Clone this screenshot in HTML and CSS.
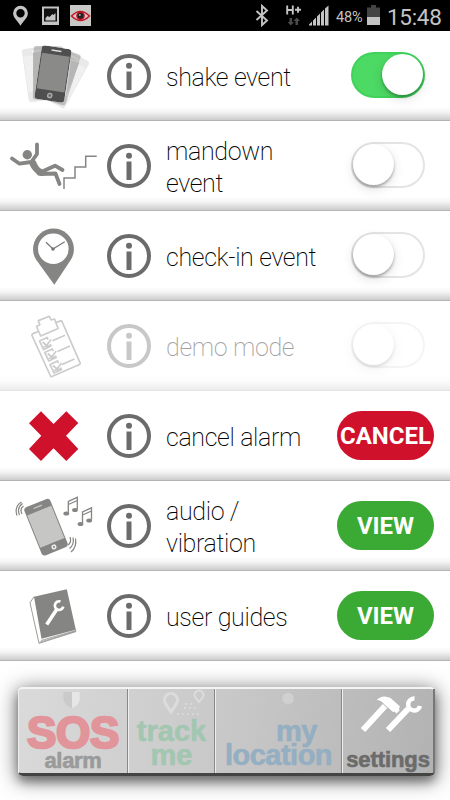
FILE: index.html
```
<!DOCTYPE html>
<html lang="en">
<head>
  <meta charset="UTF-8">
  <title>Settings</title>
  <link rel="stylesheet" href="styles.css">
</head>
<body>
  <svg class="defs" width="0" height="0">
    <symbol id="info" viewBox="0 0 44 44">
      <circle cx="22" cy="22" r="20" fill="none" stroke="#6b6b6b" stroke-width="4"/>
      <circle cx="22" cy="11.700" r="3" fill="#6b6b6b"/>
      <path d="M19.500 17.500h5V36h-5z" fill="#6b6b6b"/>
    </symbol>
    <symbol id="phone" viewBox="-15 -27 30 54">
      <rect x="-15" y="-27" width="30" height="54" rx="3.500" fill="#4f4f4f"/>
      <rect x="-14" y="-19.500" width="28" height="36" fill="#8a8a88"/>
      <path d="M-5-23.500H5" stroke="#ddd" stroke-width="1.600"/>
      <circle cx="0" cy="21.800" r="2.800" fill="#aaa"/>
      <rect x="-1.200" y="20.500" width="2.400" height="2.400" fill="#666"/>
    </symbol>
  </svg>

  <div class="status-bar">
    <svg width="100" height="31" viewBox="0 0 100 31">
      <path d="M20.500 5.800a7.400 7.400 0 0 0-7.400 7.400c0 4.600 4 6.800 7.400 12.600 3.400-5.800 7.400-8 7.400-12.600a7.400 7.400 0 0 0-7.400-7.400zm0 3.200a4.200 4.200 0 1 1 0 8.400 4.200 4.200 0 0 1 0-8.400z" fill="#c4c4c4"/>
      <rect x="42" y="6.500" width="17" height="18.500" fill="#c4c4c4"/>
      <rect x="44" y="8.500" width="13" height="13" fill="#111"/>
      <path d="M45.500 20.500v-2.500l2-2 2 1 3-3 1 1 2-2v7.500z" fill="#c4c4c4"/>
      <rect x="70" y="5" width="21" height="21" fill="#c8c8c6"/>
      <path d="M71.500 16q9-9 18 0-9 9-18 0z" fill="#e3c5c5" stroke="#c01a2a" stroke-width="1.500"/>
      <circle cx="80.500" cy="15.800" r="4.300" fill="#b01524"/>
      <circle cx="80.500" cy="15.800" r="2.800" fill="#222"/>
      <circle cx="79.800" cy="15" r="1" fill="#aaa"/>
    </svg>
    <div class="status-right">
      <svg width="80" height="31" viewBox="250 0 80 31">
        <path d="M255.500 11l10.500 9.500-5 4.500V6l5 4.500-10.500 9.500" fill="none" stroke="#c4c4c4" stroke-width="1.900"/>
        <path d="M286.200 5.500v9M291.800 5.500v9M286 10h6M294 9.700h6M297 6.700v6" fill="none" stroke="#c4c4c4" stroke-width="1.900"/>
        <path d="M288.500 18h2.500v4h2l-3.200 3.500-3.300-3.500h2zM294.500 25h2.500v-4h2l-3.200-3.500-3.300 3.500h2z" fill="#4a4a4a"/>
        <path d="M308 25.500v-1l3-3v4zM312 25.500v-5l3-3v8zM316 25.500v-9l3-3v12zM320 25.500v-13l3-3v16zM324 25.500v-17l3.500-3v20z" fill="#c4c4c4"/>
      </svg>
      <span class="battery-text">48%</span>
      <svg width="13" height="31" viewBox="0 0 13 31">
        <path d="M4 5h5v2.500h4V17H0V7.500h4z" fill="#444"/>
        <path d="M0 17h13v8H0z" fill="#c4c4c4"/>
      </svg>
      <span class="clock">15:48</span>
    </div>
  </div>

  <div class="list">
    <div class="row">
      <svg class="icon" viewBox="0 0 100 90">
        <use href="#phone" x="-15" y="-27" width="30" height="54" transform="translate(40 43) rotate(-8)" opacity=".12"/>
        <use href="#phone" x="-15" y="-27" width="30" height="54" transform="translate(64 47.500) rotate(29)" opacity=".12"/>
        <use href="#phone" x="-15" y="-27" width="30" height="54" transform="translate(48 42) rotate(1)" opacity=".3"/>
        <path d="M33 22L43 22L34 64z" fill="#aaa" opacity=".7"/>
        <use href="#phone" x="-15" y="-27" width="30" height="54" transform="translate(59 45) rotate(18)" opacity=".28"/>
        <path d="M71 29L79 32L66 66z" fill="#aaa" opacity=".7"/>
        <use href="#phone" x="-15" y="-27" width="30" height="54" transform="translate(53 43) rotate(8.500)"/>
      </svg>
      <svg class="info"><use href="#info"/></svg>
      <span class="label">shake event</span>
      <span class="toggle on"></span>
    </div>

    <div class="row">
      <svg class="icon" viewBox="0 0 100 90">
        <g fill="none" stroke="#858583" stroke-width="3.800" stroke-linecap="round" stroke-linejoin="round">
          <path d="M37 23.500v9.500L32 40M12 37.500l7.500 5.200L31 41"/>
          <path d="M40 51.500l15-6.800 7.500 4.300M41 53l14.500-.5 4 10.500"/>
        </g>
        <circle cx="27.300" cy="33.700" r="4.700" fill="#858583"/>
        <path d="M29 42l5-4c4 4 2 7 9 11l-1 6-4-.5c-4-5-6-5-9-12.500z" fill="#858583"/>
        <path d="M64 68V57h11V46h10.700V35.300h11" fill="none" stroke="#858583" stroke-width="1.500"/>
      </svg>
      <svg class="info"><use href="#info"/></svg>
      <span class="label">mandown event</span>
      <span class="toggle"></span>
    </div>

    <div class="row">
      <svg class="icon" viewBox="0 0 100 90">
        <path d="M54.300 73.700L36 48.500A20.400 20.400 0 1 1 71 48.500z" fill="#858583"/>
        <circle cx="53.300" cy="37.700" r="15.300" fill="#fff"/>
        <path d="M46 31.300l7 6.700 11.700-7.300" fill="none" stroke="#777" stroke-width="1.200"/>
        <circle cx="53" cy="38" r="1.800" fill="#777"/>
      </svg>
      <svg class="info"><use href="#info"/></svg>
      <span class="label">check-in event</span>
      <span class="toggle"></span>
    </div>

    <div class="row disabled">
      <svg class="icon" viewBox="0 0 100 90">
        <g fill="none" stroke="#777" stroke-width="1.700" stroke-linejoin="round">
          <path d="M38 30.500l-5.500 2.400q-1 .5-.5 1.600L50.500 75q.5 1 1.500.5L79.500 63.500q1-.5.600-1.600L62 20.500q-.5-1-1.500-.6L55 22"/>
          <path d="M40.700 35l-4.200-9.500 3.300-1.700-1.500-4.200 11-4.300 1.800 3.700 3.500-1 3.500 9.500z"/>
          <path d="M52.500 39.700l12.500-5.500M57.500 50.500l12.500-5.500M62 63.500l12.500-5.500"/>
          <g id="check">
            <path d="M48 38.500l-1-2-7.500 3.400 4 8.600 7.500-3.400-1-2M42.500 41l4 3.500 4.500-6M43.500 46l6-1.500"/>
          </g>
          <use href="#check" x="5.200" y="11.500"/>
          <use href="#check" x="10.500" y="23.500"/>
        </g>
      </svg>
      <svg class="info"><use href="#info"/></svg>
      <span class="label">demo mode</span>
      <span class="toggle"></span>
    </div>

    <div class="row">
      <svg class="icon" viewBox="0 0 100 90">
        <path d="M41 20.300L53.500 33 66.300 20.300 78.300 32 66 44.700 78.300 58 66.300 70 53.500 57.300 41 70 29 58 41.300 44.700 29 32.300z" fill="#d0112b"/>
      </svg>
      <svg class="info"><use href="#info"/></svg>
      <span class="label">cancel alarm</span>
      <button class="btn btn-red">CANCEL</button>
    </div>

    <div class="row">
      <svg class="icon" viewBox="0 0 100 90">
        <g transform="translate(46 46.200) rotate(-22)">
          <rect x="-14" y="-26" width="28" height="52" rx="3.500" fill="#858583"/>
          <rect x="-13" y="-18" width="26" height="35" fill="#c6c6c5"/>
          <path d="M-4.500-22h9" stroke="#ccc" stroke-width="1.200"/>
          <circle cx="0" cy="21.300" r="2.500" fill="#eee"/>
          <circle cx="0" cy="21.300" r="1" fill="#858583"/>
        </g>
        <g fill="none" stroke="#858583" stroke-width="1.200">
          <path d="M22 33q-2.500-5 1.500-8M19.500 34q-3-7 3-11.500M17 34.500q-3-9 4.500-13.500"/>
          <path d="M68 64q4-3 2-8M69.500 67.500q5-4 3.500-11M71 71q6-5 4.500-13.500"/>
        </g>
        <g id="notes">
          <path d="M68.300 32V20.300l9-4V28M68.300 23.500l9-4" fill="none" stroke="#858583" stroke-width="1.300"/>
          <ellipse cx="66.300" cy="32.500" rx="2.900" ry="2" fill="#858583"/>
          <ellipse cx="75" cy="29" rx="2.900" ry="2" fill="#858583"/>
        </g>
        <use href="#notes" x="14.200" y="10.500"/>
      </svg>
      <svg class="info"><use href="#info"/></svg>
      <span class="label">audio / vibration</span>
      <button class="btn">VIEW</button>
    </div>

    <div class="row">
      <svg class="icon" viewBox="0 0 100 90">
        <path d="M34 25.700L30 31.700l9 40.600 36.700-11.600v-2" fill="#fff" stroke="#858583" stroke-width=".8"/>
        <path d="M41 69.500l34.700-10M39.500 71.200l36-11" stroke="#858583" stroke-width=".7"/>
        <path d="M34 25.700l32.800-7.500 9 40.500-34.300 9z" fill="#858583"/>
        <path d="M46.700 53.500L56.700 38.500" stroke="#fff" stroke-width="3.600"/>
        <path d="M60.500 30.500a4.300 4.300 0 1 0 2.800 5.200" fill="none" stroke="#fff" stroke-width="2.700"/>
      </svg>
      <svg class="info"><use href="#info"/></svg>
      <span class="label">user guides</span>
      <button class="btn">VIEW</button>
    </div>
  </div>

  <div class="footer">
    <div class="tabs">
      <div class="tab tab-sos">
        <svg class="tab-icon" width="30" height="24" viewBox="0 0 30 24">
          <path d="M5 3h9v17q-8-3-9-9z" fill="#cacaca"/>
          <path d="M14 3h8v8q-1 6-8 9z" fill="#e6e6e6"/>
        </svg>
        <span class="sos">SOS</span>
        <span class="small">alarm</span>
      </div>
      <div class="tab tab-track">
        <svg class="tab-icon" width="86" height="30" viewBox="0 0 86 30">
          <g fill="none" stroke="#dcdcdc">
            <path d="M42 23l-5.500-8.500a6.500 6.500 0 1 1 11 0z" stroke-width="3"/>
            <path d="M70 13l-4-5a4.500 4.500 0 1 1 8 0z" stroke-width="2"/>
            <path d="M48 25h25M55 19h12M56 15h10" stroke-width="1.300" stroke-dasharray="2 3"/>
          </g>
        </svg>
        <span>track</span>
        <span>me</span>
      </div>
      <div class="tab tab-location">
        <svg class="tab-icon" width="126" height="30" viewBox="0 0 126 30">
          <circle cx="72" cy="9.500" r="5.800" fill="#d0d0d0"/>
          <path d="M68 14.500l-9 9" stroke="#cacaca"/>
        </svg>
        <span class="my">my</span>
        <span>location</span>
      </div>
      <div class="tab tab-settings">
        <svg class="tab-icon" width="92" height="50" viewBox="0 0 92 50">
          <path d="M21 41L43 17" stroke="#fff" stroke-width="6"/>
          <path d="M34.500 11q6-6 14-2l9.500 8.500-1 2 .5 2-3 3-2-2-1.500.5-9-8q-3-4-7.500-4z" fill="#fff"/>
          <path d="M46 41l20-21" stroke="#fff" stroke-width="6"/>
          <path d="M72.500 9.500a6 6 0 1 0 5.500 7.500" fill="none" stroke="#fff" stroke-width="4.500"/>
        </svg>
        <span class="small">settings</span>
      </div>
    </div>
  </div>
</body>
</html>
```
FILE: styles.css
```
body {
  margin: 0;
  width: 450px;
  height: 800px;
  overflow: hidden;
  background: #fff;
  font-family: Roboto, "Liberation Sans", sans-serif;
}

.defs {
  display: block;
}

.status-bar {
  display: flex;
  justify-content: space-between;
  height: 31px;
  background: #000;
  color: #c4c4c4;
}

.status-right {
  display: flex;
  align-items: center;
  padding-right: 8px;
}

.battery-text {
  width: 31px;
  margin-left: 5px;
  padding-top: 3px;
  font-size: 14.5px;
  letter-spacing: -0.2px;
}

.clock {
  width: 55px;
  margin-left: 7px;
  padding-top: 3px;
  font-size: 22.5px;
  letter-spacing: -0.3px;
}

.row {
  display: flex;
  align-items: center;
  box-sizing: border-box;
  height: 90px;
  padding-right: 16px;
  border-bottom: 1px solid #b4b4b4;
  background: linear-gradient(#fff 76px, #f4f4f4 81px, #ccc 89px);
}

.row.disabled {
  opacity: 0.37;
}

.icon {
  width: 100px;
  height: 90px;
  margin-bottom: -1px;
}

.info {
  width: 44px;
  height: 44px;
  margin-left: 7px;
}

.label {
  width: 155px;
  margin: 4px 0 0 15px;
  font-size: 25px;
  font-weight: 200;
  line-height: 32px;
  letter-spacing: -0.35px;
  color: #000;
}

.toggle {
  box-sizing: border-box;
  width: 74px;
  height: 46px;
  margin: 0 9px 1px auto;
  border: 2px solid #e4e4e4;
  border-radius: 23px;
  background: #fff;
}

.toggle::before {
  content: "";
  display: block;
  width: 41px;
  height: 41px;
  border-radius: 50%;
  background: #fff;
  box-shadow: 0 2px 3px rgba(0, 0, 0, 0.3), 0 4px 12px rgba(0, 0, 0, 0.12);
}

.toggle.on {
  border-color: #3fd35a;
  background: #4cd964;
}

.toggle.on::before {
  margin-left: 29px;
}

.btn {
  width: 97px;
  height: 49px;
  margin-left: auto;
  padding: 0;
  border: none;
  border-radius: 25px;
  background: #3aaa35;
  color: #fff;
  font-family: inherit;
  font-size: 24px;
  font-weight: 700;
}

.btn-red {
  background: #d0112b;
}

.footer {
  padding: 26px 15px 0 18px;
}

.tabs {
  display: flex;
  box-sizing: border-box;
  height: 89px;
  border-top: 2px solid #f4f4f4;
  border-bottom: 3px solid #444;
  border-radius: 5px;
  background: linear-gradient(100deg, #dadada, #c6c6c6 55%, #b2b2b2);
  box-shadow: 0 3px 20px 2px rgba(0, 0, 0, 0.5), 0 6px 8px rgba(0, 0, 0, 0.3);
}

.tab {
  display: flex;
  flex-direction: column;
  align-items: center;
  box-sizing: border-box;
  border-right: 1px solid #888;
  border-left: 1px solid #eee;
  font-family: "Liberation Sans", Arial, sans-serif;
  font-weight: 700;
  font-size: 29px;
  line-height: 24px;
  letter-spacing: -0.5px;
  -webkit-text-stroke: 0.6px;
}

.small {
  font-size: 22px;
  letter-spacing: -0.3px;
  color: #9a9a9a;
}

.tab-sos {
  width: 110px;
}

.sos {
  margin-top: 5px;
  font-size: 44px;
  line-height: 32px;
  letter-spacing: -0.3px;
  color: #e1949a;
  -webkit-text-stroke: 2.5px;
}

.tab-track {
  width: 87px;
  letter-spacing: 0;
  color: #a3c6b1;
}

.tab-location {
  width: 127px;
  color: #94aec2;
}

.my {
  padding-left: 36px;
}

.tab-settings {
  width: 93px;
  border-right: 2px solid #777;
}

.tab-settings .small {
  margin-top: 9px;
  letter-spacing: -0.1px;
  color: #6b6b6b;
}
```
